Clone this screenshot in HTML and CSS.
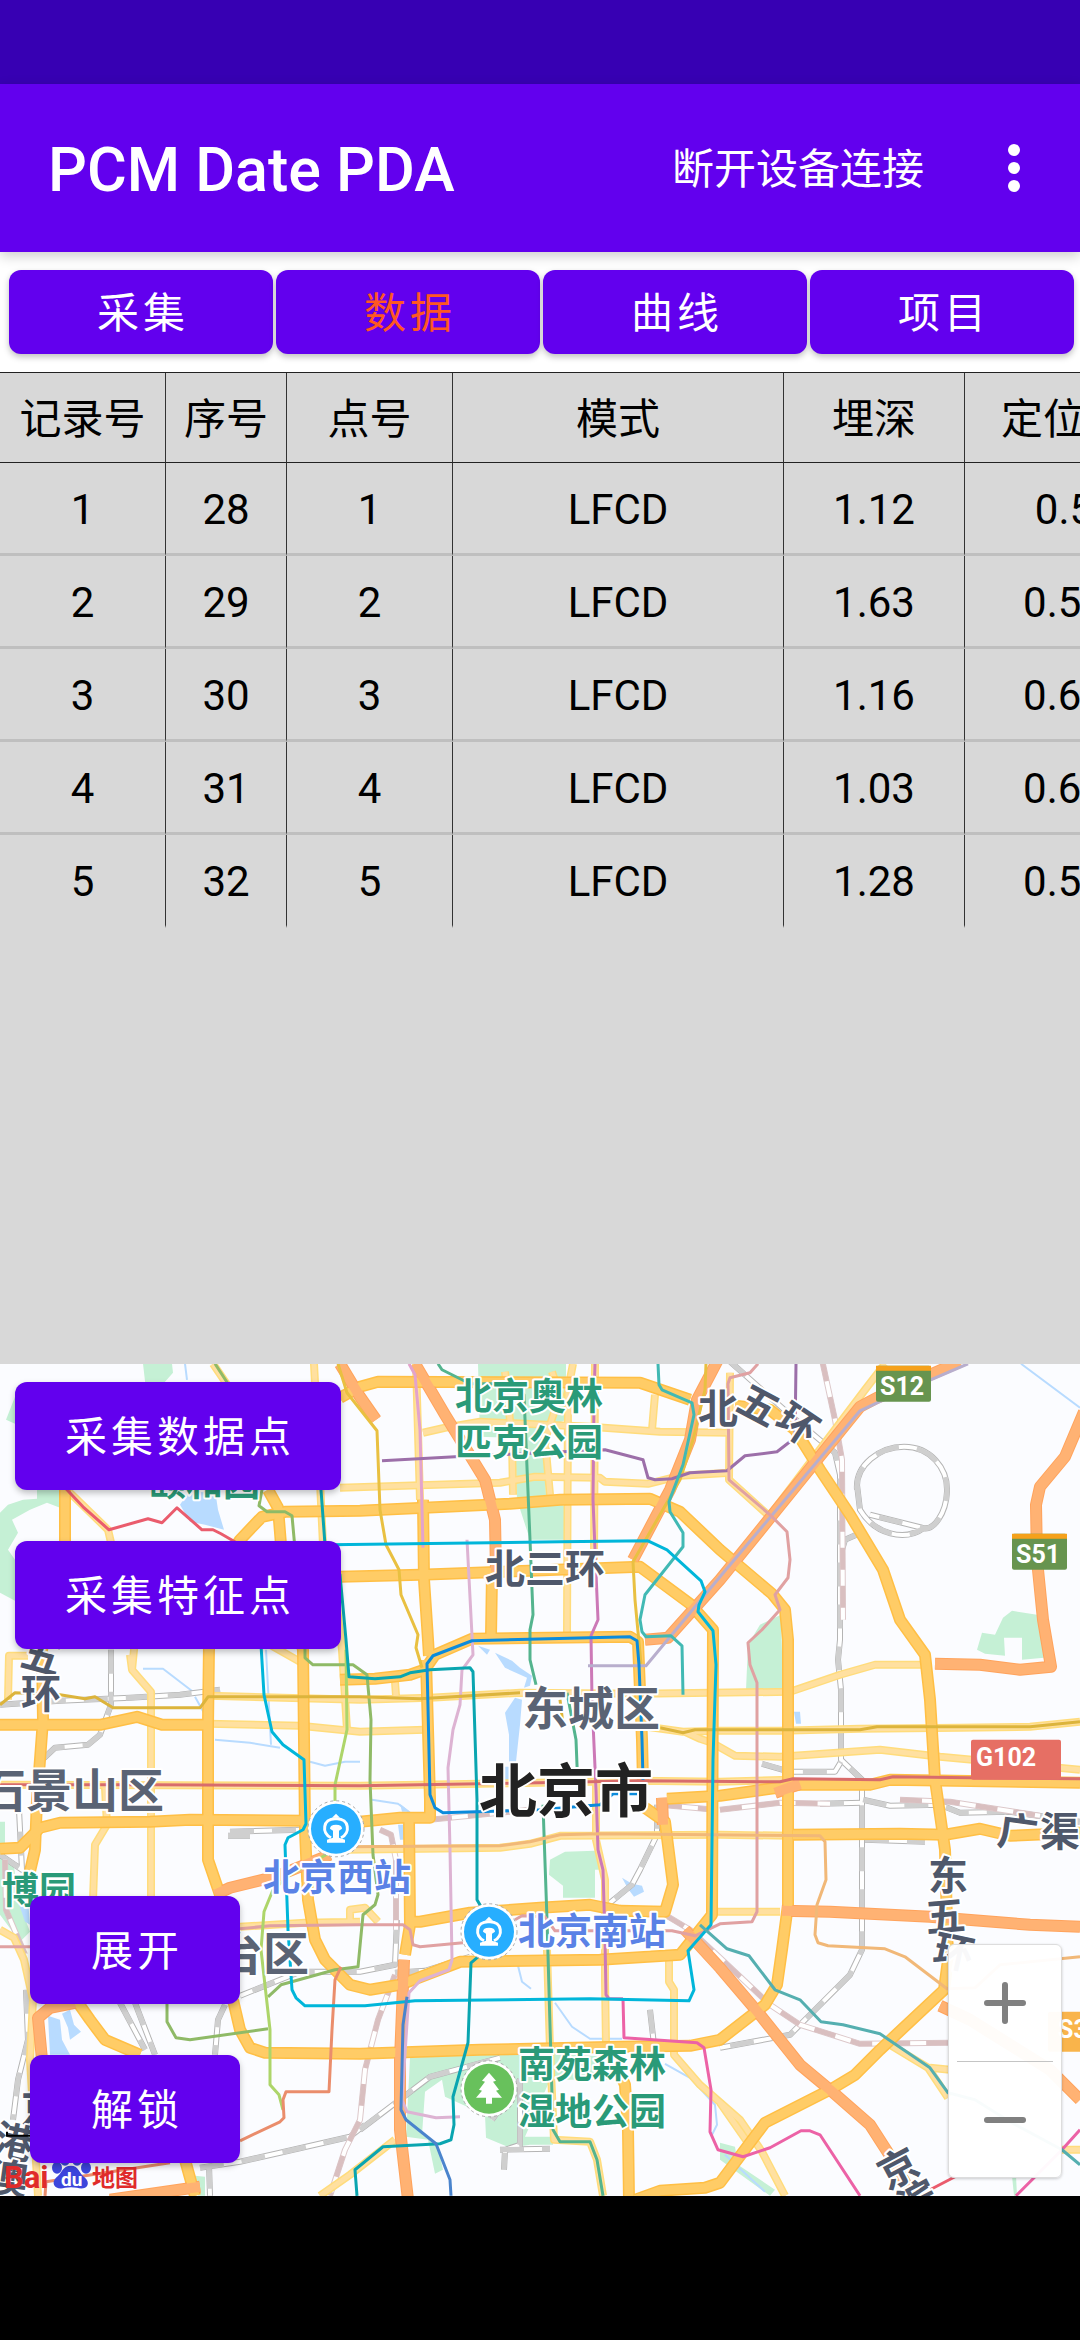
FILE: index.html
```
<!DOCTYPE html>
<html lang="zh-CN">
<head>
    <meta charset="UTF-8">
    <meta name="viewport" content="width=device-width, initial-scale=1.0">
    <title>PCM Date PDA</title>
    <link rel="stylesheet" href="styles.css">
</head>
<body>
    <div class="status-bar"></div>

    <header class="app-bar">
        <h1>PCM Date PDA</h1>
        <button class="app-action" type="button">断开设备连接</button>
        <button class="app-menu" type="button" aria-label="更多">
            <svg width="12" height="48" viewBox="0 0 12 48" fill="#fff">
                <circle cx="6" cy="6" r="6"/>
                <circle cx="6" cy="24" r="6"/>
                <circle cx="6" cy="42" r="6"/>
            </svg>
        </button>
    </header>

    <nav class="tabs">
        <button class="btn tab" type="button">采集</button>
        <button class="btn tab active" type="button">数据</button>
        <button class="btn tab" type="button">曲线</button>
        <button class="btn tab" type="button">项目</button>
    </nav>

    <main class="data-panel">
        <table class="data-table">
            <colgroup>
                <col class="col-record">
                <col class="col-index">
                <col class="col-point">
                <col class="col-mode">
                <col class="col-depth">
                <col class="col-locate">
            </colgroup>
            <thead>
                <tr><th>记录号</th><th>序号</th><th>点号</th><th>模式</th><th>埋深</th><th>定位点</th></tr>
            </thead>
            <tbody>
                <tr><td>1</td><td>28</td><td>1</td><td>LFCD</td><td>1.12</td><td>0.5</td></tr>
                <tr><td>2</td><td>29</td><td>2</td><td>LFCD</td><td>1.63</td><td>0.51</td></tr>
                <tr><td>3</td><td>30</td><td>3</td><td>LFCD</td><td>1.16</td><td>0.61</td></tr>
                <tr><td>4</td><td>31</td><td>4</td><td>LFCD</td><td>1.03</td><td>0.61</td></tr>
                <tr><td>5</td><td>32</td><td>5</td><td>LFCD</td><td>1.28</td><td>0.51</td></tr>
            </tbody>
        </table>
    </main>

    <section class="map">
        <svg class="map-canvas" viewBox="0 1364 1080 832" preserveAspectRatio="xMidYMid slice">
            <defs>
                <g id="minor">
                    <path d="M213 1364L232 1392M314 1364L318 1440L323 1545L333 1575L342 1650L347 1730M67 1490L108 1530L115 1560"/>
                    <path d="M340 1488L500 1483L535 1477L600 1478L605 1482L648 1484L680 1476L730 1473M423 1433L445 1428L480 1422L590 1427L660 1432L730 1433"/>
                    <path d="M416 1364L420 1500M573 1364L568 1390L567 1635M595 1364L594 1560M505 1372L512 1440L513 1495M552 1372L560 1395L545 1440L550 1495M655 1395L652 1430"/>
                    <path d="M730 1373L729 1480L770 1517M720 1582L865 1390L885 1364"/>
                    <path d="M130 1655L132 1670L151 1692L151 1900M105 1788L107 1825L95 1845L93 1900M8 1700L9 1656L28 1656M135 1640L132 1670M270 1645L300 1662"/>
                    <path d="M0 1785L360 1786L540 1783L640 1781L720 1782L790 1780"/>
                    <path d="M208 1724L300 1726L360 1732L425 1730M208 1696L360 1700L430 1698L520 1693L640 1694L790 1692L840 1675L875 1665L925 1665M395 1682L396 1696"/>
                    <path d="M640 1726L683 1732L720 1731L780 1731L860 1729L960 1728L1030 1727L1080 1722M685 1732L700 1739L712 1743L735 1756L780 1757L880 1750L940 1757L1080 1770"/>
                    <path d="M345 1850L500 1848L530 1844L560 1836L720 1835L790 1836M596 1780L596 1840L605 1880L605 1980L606 2045M712 1912L780 1912"/>
                    <path d="M547 1950L550 2050L554 2140L590 2142L597 2160L603 2196M669 1960L669 1982L674 1990L674 2055L700 2085L740 2120L762 2152L785 2196"/>
                    <path d="M240 1927L305 1923L360 1922M350 1922L350 1910L365 1908L378 1922"/>
                    <path d="M0 1930L14 1938L24 1960L33 2000L30 2060L38 2196M320 2196L350 2175L395 2140M720 2103L750 2146M950 2070L930 2068M948 2098L928 2068L890 2045M1062 2150L1080 2150"/>
                </g>
                <g id="major">
                    <path d="M340 1398L360 1387L378 1382L640 1383L690 1400M735 1406L770 1410L795 1430L820 1470L850 1515L883 1570L900 1620L925 1655L930 1700L935 1780L945 1850L948 1960L944 1990L880 2050L855 2075L830 2090L765 2123L720 2183L705 2188L660 2191L635 2200"/>
                    <path d="M268 1490L278 1508L281 1545L290 1600L303 1650L305 1830L308 1900L315 1940L325 1960L350 1985L370 1990L400 1985L460 1962L600 1960L680 1955L712 1915L713 1630L690 1604L640 1567L420 1575L340 1577"/>
                    <path d="M65 1490L65 1545M65 1550L42 1650L43 1720L37 1800L35 1850L28 1880"/>
                    <path d="M209 1650L215 1580L240 1540L262 1517L285 1512L360 1511L510 1504L560 1500L650 1499L680 1512L720 1550L772 1594L785 1610L788 1640L788 1905L782 1950L777 1985L765 2005L720 2040L690 2046L620 2047L480 2050L360 2054L265 2053L250 2048L240 2030L233 2000"/>
                    <path d="M423 1500L424 1580L428 1640L429 1656M492 1575L491 1636"/>
                    <path d="M426 1668L435 1655L472 1639L630 1637L638 1642L642 1740L643 1782M426 1660L430 1800L430 1818L400 1818L360 1822"/>
                    <path d="M340 1680L375 1679L410 1675L430 1668"/>
                    <path d="M0 1725L100 1725L137 1717L162 1725L208 1725M209 1645L208 1725L208 1860L220 1895"/>
                    <path d="M0 1849L20 1848L40 1828L60 1823L150 1822L190 1820L305 1821"/>
                    <path d="M409 1820L410 1925L405 1955M645 1808L665 1822L673 1885L665 1912L620 1911L590 1905L540 1908L470 1913L420 1922L408 1922"/>
                    <path d="M667 1799L720 1796L770 1789L800 1785L870 1785L890 1780L1080 1783M793 1835L900 1834L945 1835L980 1829L1010 1836L1080 1833"/>
                    <path d="M78 2003L90 2020L105 2040L140 2055M607 2045L625 2085L628 2130L629 2200M185 2160L195 2196"/>
                </g>
                <g id="express">
                    <path d="M415 1364L445 1415L485 1480L495 1520L496 1572M340 1364L360 1397L376 1420M720 1356L697 1400L690 1440L670 1490L633 1560"/>
                    <path d="M645 1640L668 1638L720 1580L860 1407L877 1398L960 1362"/>
                    <path d="M1084 1412L1065 1457L1040 1487L1036 1505L1037 1560L1043 1620L1051 1667L1020 1670L980 1665L935 1664"/>
                    <path d="M782 1911L830 1912L930 1917L1030 1925L1080 1927M775 1793L800 1784M662 1798L663 1825"/>
                    <path d="M685 1930L720 1968L760 2015L800 2065L830 2090L870 2125L888 2153L915 2200"/>
                    <path d="M215 1895L230 1888L275 1877L330 1855M404 1960L400 2060L400 2130L408 2200M42 2060L38 2018L50 2008L75 2003M110 2200L200 2187M940 2006L970 2020L1050 2070L1080 2100"/>
                </g>
                <g id="rail">
                    <path d="M728 1360L790 1415L835 1453L840 1475L840 1640L838 1660L841 1690L841 1760L862 1780L862 1950L850 1975L790 2035L720 2048M861 1533L845 1540L842 1550"/>
                    <path d="M857 1490C855 1465 880 1447 904 1447C930 1447 948 1468 947 1492C946 1513 934 1532 922 1528L870 1515M857 1485L860 1510C875 1535 905 1542 924 1528"/>
                    <path d="M111 1650L111 1705L100 1735L88 1745L55 1748L40 1762M0 1705L60 1701L130 1698L180 1695L220 1690"/>
                    <path d="M762 1764L790 1772L835 1772L841 1762M863 1800L890 1806L940 1805L960 1813L1010 1812L1080 1822M820 1804L862 1803M865 1840L925 1842"/>
                    <path d="M657 1805L657 1835L640 1870L632 1885L610 1903M403 1700M230 1832L300 1830M228 1836L250 1836"/>
                    <path d="M397 1920L395 1965L360 1972L300 1972L240 1996M395 1973L425 1971L470 1957M26 1990L28 2040L18 2080L13 2120M18 1790L22 1870L0 1855M120 2003L145 2050M135 2003L155 2055M225 2005L218 2020L215 2055"/>
                    <path d="M200 2168L240 2162L280 2153L350 2137L365 2125M209 2165L210 2196M360 2130L430 2077L500 2058M500 2150L550 2149M520 2080L520 2145L505 2150L504 2170M650 2010L654 2045M520 2080L492 2120"/>
                </g>
                <g id="rail-fast">
                    <path d="M822 1360L835 1420L842 1460L843 1620M720 1810L780 1803L830 1804M900 1800L950 1802L1040 1816M430 1820L530 1810M660 1805L715 1810"/>
                    <path d="M380 1830L391 1835L396 1860L396 1930M665 1915L690 1930L720 1958L770 2005L800 2025L860 2044L950 2043M395 1975L378 2020L365 2070L360 2120L345 2150L330 2196M5 1860L6 1910L25 1955"/>
                </g>
                <g id="station">
                    <circle r="28" fill="#fff" stroke="#aaa" stroke-dasharray="3 3"/>
                    <circle r="25" fill="#27aeff"/>
                    <path d="M-5 9C-15 4 -13 -10 -1 -10L1 -10C13 -10 15 4 5 9" fill="none" stroke="#fff" stroke-width="3"/>
                    <path d="M-4 -11L0 -15L4 -11ZM-6 0Q-6 -4 0 -4Q6 -4 6 0L3 2V9L9 11V14H-9V11L-3 9V2Z" fill="#fff"/>
                </g>
            </defs>

            <rect y="1364" width="1080" height="832" fill="#fbfcff"/>

            <!-- parks -->
            <g fill="#c5f0d5">
                <path d="M143 1364H172L173 1373L165 1382V1390H146ZM6 1420L15 1397V1424ZM0 1513L8 1505L23 1500L37 1499V1488H60V1508L47 1503L30 1510L12 1520L18 1533L8 1550L15 1560V1601L0 1593Z"/>
                <path d="M478 1364H566V1420L543 1430L546 1495L565 1507V1540H530L517 1500L515 1438L480 1437Z"/>
                <path d="M781 1615L760 1625L748 1645L746 1690H783ZM977 1650L982 1633L995 1635L1003 1618L1012 1611L1037 1615L1042 1640L1044 1658L1022 1660V1638H1004L1005 1656L985 1654Z"/>
                <path d="M550 1860L565 1852L595 1851L600 1870H595V1898H563V1886L549 1875Z"/>
                <path d="M410 2058L520 2052L625 2058V2080H550L525 2137H553V2145H530L510 2148L486 2138L485 2115L445 2097L442 2080L425 2092L422 2135L437 2143L443 2170L435 2174L428 2140L406 2137Z"/>
                <path d="M0 1822H5V1860L14 1866L18 1900L30 1932L20 1942L0 1915ZM195 2176L205 2177V2196H198ZM720 2143L735 2147L738 2165L775 2190L770 2196L720 2160ZM1012 2176H1016L1017 2196H1014Z"/>
            </g>

            <!-- water -->
            <g fill="#b8dbff">
                <path d="M180 1505L190 1490H215L218 1510L224 1530L205 1525L190 1522ZM505 1713L515 1698L522 1700L520 1725L516 1762H509V1735ZM503 1767H509V1785H503Z"/>
                <path d="M478 1646L490 1650L487 1655ZM495 1653L512 1661L520 1668L532 1676L530 1686L524 1688L527 1678L505 1668ZM400 1804L410 1812H402ZM398 1825H404V1840H400Z"/>
                <path d="M48 2016L60 2020L62 2040L70 2055H50ZM62 2014L70 2010L74 2025L81 2032L70 2040L68 2028ZM14 1890L28 1900L30 1925L25 1922ZM794 1712H800L801 1724H796ZM622 1878L632 1884L642 1886L644 1892L634 1897L628 1889Z"/>
            </g>
            <g class="stream">
                <path d="M185 1364L187 1380M143 1669L163 1669L193 1692M195 1697L205 1715M266 1650L271 1745M215 1740L250 1743L280 1748M310 1762L325 1766L345 1762L360 1762M372 1800L398 1804L410 1813"/>
                <path d="M518 1966L522 1982L531 1989M555 2003L572 2027L590 2039L622 2039M665 2064L690 2078L715 2105L717 2125L712 2135M725 2155L765 2192M1021 1364L1080 1408"/>
            </g>

            <!-- roads -->
            <use href="#rail" class="rail-edge"/>
            <use href="#rail" class="rail-bed"/>
            <use href="#rail" class="rail-dash"/>
            <use href="#rail-fast" class="rail-fast-edge"/>
            <use href="#rail-fast" class="rail-bed"/>
            <use href="#rail-fast" class="rail-fast-dash"/>
            <use href="#minor" class="minor-edge"/>
            <use href="#minor" class="minor-fill"/>
            <use href="#major" class="major-edge"/>
            <use href="#express" class="express-edge"/>
            <use href="#major" class="major-fill"/>
            <use href="#express" class="express-fill"/>

            <!-- metro lines -->
            <g class="metro">
                <path stroke="#ea5c6d" d="M66 1489L83 1507L109 1530L148 1519L162 1523L177 1508L202 1530H213L221 1534L240 1545M930 2190L955 2177"/>
                <path stroke="#e9c041" d="M338 1364L347 1393L377 1431L380 1510L386 1545L399 1570L401 1595L418 1635L416 1648L422 1668M706 1364L705 1390L693 1440L680 1480L633 1562L635 1600L641 1664"/>
                <path stroke="#e3a3cc" d="M409 1364L415 1375L420 1430L423 1548"/>
                <path stroke="#ddb3d3" d="M467 1540L473 1655L462 1670L460 1705L453 1730L448 1768L450 1850L452 1960L449 1970L420 1981L409 1993L402 2100L407 2112L436 2118L460 2117"/>
                <path stroke="#9c6fa9" d="M382 1461L455 1457L520 1454L605 1450L643 1460L648 1478L655 1480L672 1479L690 1473L727 1471L745 1456L777 1452L795 1438L796 1364"/>
                <path stroke="#54b48e" d="M438 1364L442 1370L470 1384L510 1384L524 1395L530 1540L533 1615L530 1630V1660L536 1685M567 1693L576 1740L578 1790M543 1805L547 1920L553 2130L560 2142H590L597 2160L603 2196"/>
                <path stroke="#cc79b7" d="M595 1364L594 1400L593 1500L595 1550L598 1620L591 1636L592 1700L596 1790L598 1850L603 1870L605 1940L606 1995L609 1999H623"/>
                <path stroke="#ec62a6" d="M623 1999L624 2038L697 2043L704 2048L711 2090L710 2132L718 2150L743 2157L770 2148L801 2131H810L820 2135L860 2196M1080 2130L1062 2150L1016 2196"/>
                <path stroke="#b8aecd" d="M588 1666H646L720 1577L860 1411L877 1403L968 1364"/>
                <path stroke="#e0a1a2" d="M758 1364L750 1373L730 1378L728 1384L729 1480L770 1515L787 1532L790 1560L788 1578L775 1595L780 1610L762 1630L748 1643L750 1665L757 1683V1912L752 1922L720 1924L695 1936L672 1931H555L545 1917L522 1916L515 1920M463 1943L420 1947L413 1945L410 1930L403 1925H360L270 1926L240 1929M0 1947H30"/>
                <path stroke="#41b9b4" d="M658 1364L659 1385L662 1390L692 1403L694 1415L683 1465L669 1502L670 1512L683 1533V1547L645 1595L640 1620L642 1632L646 1637L671 1636L682 1646L683 1695"/>
                <path stroke="#8fba67" d="M228 1384L215 1364M262 1490L259 1506L267 1512H285L292 1516L296 1560L305 1650V1658L313 1665H353L367 1675L371 1720L370 1780L373 1855L378 1895L375 1905L363 1915L358 1967L335 1970L281 1985L268 1997M167 2000V2022L176 2038L190 2040L268 2029"/>
                <path stroke="#add56a" d="M346 1650L347 1730L335 1785V1850L290 1875L273 1890L264 1912L261 1950L270 2030V2085L279 2095L283 2110"/>
                <path stroke="#ea8d6c" d="M341 1967L335 1980L332 2030L329 2092H286L283 2100L284 2118L280 2122L240 2141M45 2196L46 2182L170 2163"/>
                <path stroke="#dcb43c" d="M0 1705L15 1693L60 1695L85 1699L95 1697L113 1708H200L208 1697H360L420 1699L520 1693M660 1728L683 1733L695 1730H860L877 1727H1030L1080 1722M560 1700L563 1725"/>
                <path stroke="#d86c6c" d="M0 1785H150L360 1786L540 1783L640 1781L780 1782L793 1779L880 1780L893 1777L970 1778L1080 1779"/>
                <path stroke="#f1b878" d="M345 1847L500 1846L530 1842L560 1835L600 1834L820 1836L825 1842L826 1880L817 1905L815 1935L818 1943L828 1946L885 1949L905 1957L947 1989L975 1988L1000 1965L1080 1957"/>
                <path stroke="#00b6da" d="M330 1545L560 1542L648 1541L667 1550L701 1581L705 1592L699 1605L698 1612L713 1631L716 1665L713 1760L711 1925L688 1951L694 1990L689 2001L590 1999L415 2001L365 2006H305L296 1998L292 1990L288 1930L285 1845L288 1838L303 1830L306 1824L304 1760L283 1745L272 1732L264 1695L261 1645"/>
                <path stroke="#0aa5b0" d="M321 1490L325 1545L340 1575L346 1640L349 1677L375 1679L400 1677L410 1673L430 1670L470 1668L473 1672L477 1800V1900L484 1912M478 1957L471 1963L468 2043L453 2097L454 2125L451 2140L440 2144L383 2147L355 2170L357 2196"/>
                <path stroke="#0b8bdc" d="M643 1780L642 1740L639 1665L637 1641L630 1637L472 1641L433 1656L427 1664L430 1795L435 1808L443 1813L540 1810L600 1805L613 1794H640"/>
                <path stroke="#4a84cd" d="M407 1997L403 2025L401 2110L406 2120L436 2144L450 2180L451 2196"/>
                <path stroke="#55afb0" d="M700 1925L727 1949L749 1956L775 1990L800 2000L821 2022L843 2025L880 2034L930 2068L948 2093L975 2100L1010 2122L1062 2150L1080 2165"/>
            </g>

            <!-- road shields -->
            <g class="shield">
                <rect x="876" y="1366" width="55" height="36" rx="2" fill="#67944f"/>
                <rect x="876" y="1366" width="55" height="5" fill="#f5a11b"/>
                <text x="880" y="1395">S12</text>
                <rect x="1012" y="1534" width="55" height="36" rx="2" fill="#67944f"/>
                <rect x="1012" y="1534" width="55" height="5" fill="#f5a11b"/>
                <text x="1016" y="1563">S51</text>
                <rect x="971" y="1740" width="90" height="40" rx="2" fill="#e66f64"/>
                <text x="976" y="1766">G102</text>
                <rect x="1048" y="2012" width="50" height="40" rx="2" fill="#f9b44b"/>
                <text x="1058" y="2038">S323</text>
            </g>

            <!-- place names -->
            <g class="label park">
                <text x="455" y="1410">北京奥林</text>
                <text x="455" y="1456">匹克公园</text>
                <text x="149" y="1496">颐和园</text>
                <text x="2" y="1904">博园</text>
                <text x="518" y="2078">南苑森林</text>
                <text x="518" y="2125">湿地公园</text>
            </g>
            <g class="label rail-stop">
                <text x="263" y="1891">北京西站</text>
                <text x="518" y="1945">北京南站</text>
            </g>
            <g class="label district">
                <text x="522" y="1725">东城区</text>
                <text x="-20" y="1807">石景山区</text>
                <text x="171" y="1970">丰台区</text>
            </g>
            <g class="label city">
                <text x="479" y="1812">北京市</text>
            </g>
            <g class="label road">
                <text x="485" y="1583">北三环</text>
                <text transform="translate(718 1408)" x="-20" y="15">北</text>
                <text transform="translate(759 1405) rotate(28)" x="-20" y="15">五</text>
                <text transform="translate(798 1424) rotate(34)" x="-20" y="15">环</text>
                <text transform="translate(42 1656) rotate(15)" x="-20" y="15">五</text>
                <text transform="translate(41 1693)" x="-20" y="15">环</text>
                <text transform="translate(1018 1832) rotate(8)" x="-20" y="15">广</text>
                <text transform="translate(1060 1831)" x="-20" y="15">渠</text>
                <text transform="translate(948 1875)" x="-20" y="15">东</text>
                <text transform="translate(945 1916) rotate(-5)" x="-20" y="15">五</text>
                <text transform="translate(954 1952) rotate(12)" x="-20" y="15">环</text>
                <text transform="translate(898 2168) rotate(-28)" x="-20" y="15">京</text>
                <text transform="translate(918 2200) rotate(-28)" x="-20" y="15">滨</text>
                <text transform="translate(41 2108)" x="-20" y="15">京</text>
                <text transform="translate(14 2142) rotate(12)" x="-20" y="15">港</text>
                <text transform="translate(8 2178) rotate(8)" x="-20" y="15">澳</text>
            </g>
            <path d="M7 2132V2136H60" fill="none" stroke="#000" stroke-width="2"/>

            <!-- markers -->
            <use href="#station" x="336" y="1829"/>
            <use href="#station" x="489" y="1932"/>
            <g transform="translate(489 2089)">
                <circle r="28" fill="#fff" stroke="#aaa" stroke-dasharray="3 3"/>
                <circle r="25" fill="#68c15c"/>
                <path d="M0 -16L7 -8L4 -7L10 1L7 2L13 9H3V15H-3V9H-13L-7 2L-10 1L-4 -7L-7 -8Z" fill="#fff"/>
            </g>

            <!-- map provider logo -->
            <g class="provider">
                <text class="provider-latin" x="4" y="2188">Bai</text>
                <g fill="#3c45dc">
                    <ellipse cx="57" cy="2168" rx="5" ry="6"/>
                    <ellipse cx="65" cy="2160" rx="5" ry="6"/>
                    <ellipse cx="77" cy="2160" rx="5" ry="6"/>
                    <ellipse cx="86" cy="2168" rx="5" ry="6"/>
                    <path d="M71 2166C79 2166 79 2174 85 2178C92 2185 85 2191 77 2188Q71 2187 65 2188C56 2191 50 2184 56 2178C62 2174 62 2166 71 2166Z"/>
                </g>
                <text class="provider-du" x="61" y="2186">du</text>
                <text class="provider-name" x="92" y="2186">地图</text>
            </g>
        </svg>

        <div class="map-actions top">
            <button class="btn map-btn" type="button">采集数据点</button>
            <button class="btn map-btn" type="button">采集特征点</button>
        </div>
        <div class="map-actions bottom">
            <button class="btn map-btn" type="button">展开</button>
            <button class="btn map-btn" type="button">解锁</button>
        </div>
        <div class="zoom-control">
            <button type="button" aria-label="放大">
                <svg width="42" height="42" viewBox="0 0 42 42"><path d="M3 21H39M21 3V39"/></svg>
            </button>
            <button type="button" aria-label="缩小">
                <svg width="42" height="42" viewBox="0 0 42 42"><path d="M3 21H39"/></svg>
            </button>
        </div>
    </section>

    <div class="nav-bar"></div>
</body>
</html>
```

FILE: styles.css
```
* {
    box-sizing: border-box;
}

body {
    margin: 0;
    min-height: 100vh;
    display: flex;
    flex-direction: column;
    font-family: Roboto, "Noto Sans CJK SC", sans-serif;
    font-size: 42px;
    color: #000;
    background: #fff;
}

button {
    border: none;
    margin: 0;
    padding: 0;
    font: inherit;
    color: inherit;
    background: none;
    cursor: pointer;
}

svg {
    display: block;
}

.status-bar {
    height: 84px;
    background: #3700b3;
}

.app-bar {
    position: relative;
    display: flex;
    align-items: center;
    height: 168px;
    padding: 0 60px 0 48px;
    color: #fff;
    background: #6200ee;
    box-shadow: 0 4px 12px rgba(0, 0, 0, 0.2);
}

.app-bar h1 {
    flex: 1;
    margin: 0;
    padding-top: 4px;
    font-size: 61px;
    font-weight: 500;
}

.app-action {
    padding-bottom: 6px;
}

.app-menu {
    margin-left: 84px;
}

/* Buttons */
.btn {
    padding-bottom: 6px;
    color: #fff;
    background: #6200ee;
    border-radius: 12px;
    letter-spacing: 4px;
    text-indent: 4px;
    box-shadow: 0 3px 6px rgba(0, 0, 0, 0.25);
}

.tabs {
    display: flex;
    gap: 3px;
    padding: 18px 6px 18px 9px;
}

.tab {
    flex: 1;
    height: 84px;
}

.tab.active {
    color: #ff5722;
}

/* Data table */
.data-panel {
    flex: 31 1 0;
    overflow: hidden;
    background: #d8d8d8;
    border-top: 1px solid #222;
}

.data-table {
    width: 1164px;
    table-layout: fixed;
    border-spacing: 0;
}

.col-record { width: 166px; }
.col-index { width: 121px; }
.col-point { width: 166px; }
.col-mode { width: 331px; }
.col-depth { width: 181px; }
.col-locate { width: 199px; }

.data-table th,
.data-table td {
    height: 93px;
    padding: 4px 0 0;
    text-align: center;
    font-weight: 400;
    line-height: 48px;
    border-right: 1px solid #333;
    border-bottom: 3px solid #bfbfbf;
}

.data-table th {
    height: 90px;
    border-bottom: 1px solid #222;
}

.data-table tr:last-child td {
    border-bottom-color: #d8d8d8;
}

/* Map */
.map {
    position: relative;
    flex: 26 1 0;
    min-height: 0;
    overflow: hidden;
    background: #fbfcff;
}

.map-canvas {
    position: absolute;
    width: 100%;
    height: 100%;
    fill: none;
    stroke-linejoin: round;
}

.minor-edge { stroke: #ffdc7c; stroke-width: 8px; }
.minor-fill { stroke: #ffe0a0; stroke-width: 5px; }
.major-edge { stroke: #ffbf45; stroke-width: 12px; }
.major-fill { stroke: #ffcc66; stroke-width: 9px; }
.express-edge { stroke: #ffa35c; stroke-width: 12px; }
.express-fill { stroke: #ffb273; stroke-width: 10px; }
.rail-edge { stroke: #b4b4b4; stroke-width: 6px; }
.rail-bed { stroke: #fff; stroke-width: 4px; }
.rail-dash { stroke: #cfcfcf; stroke-width: 5px; stroke-dasharray: 24px 18px; }
.rail-fast-edge { stroke: #dcc8ca; stroke-width: 6px; }
.rail-fast-dash { stroke: #d9bfc0; stroke-width: 5px; stroke-dasharray: 22px 16px; }
.stream { stroke: #b8dbff; stroke-width: 2px; }
.metro { stroke-width: 3px; }

.label {
    font-family: "Noto Sans CJK SC", sans-serif;
    font-weight: 700;
    stroke: #fff;
    stroke-width: 4px;
    paint-order: stroke;
}

.park { font-size: 37px; fill: #2a9a78; }
.rail-stop { font-size: 37px; fill: #5a82e6; }
.district { font-size: 46px; fill: #5a6374; }
.road { font-size: 40px; fill: #4f586b; }
.city { font-size: 58px; fill: #222; }

.shield {
    font-size: 25px;
    font-weight: 700;
}

.shield text {
    fill: #fff;
}

.provider {
    font-weight: 700;
    fill: #e02b2b;
}

.provider-latin {
    font-size: 31px;
}

.provider-du {
    font-size: 19px;
    fill: #fff;
}

.provider-name {
    font-family: "Noto Sans CJK SC", sans-serif;
    font-size: 23px;
}

.map-actions {
    position: absolute;
    display: flex;
    flex-direction: column;
    gap: 51px;
}

.map-actions.top {
    top: 18px;
    left: 15px;
}

.map-actions.bottom {
    bottom: 33px;
    left: 30px;
}

.map-btn {
    height: 108px;
    padding: 0 46px 6px;
    min-width: 210px;
}

.zoom-control {
    position: absolute;
    right: 18px;
    bottom: 18px;
    display: flex;
    flex-direction: column;
    padding: 0 8px;
    background: rgba(255, 255, 255, 0.96);
    border: 1px solid #ddd;
    border-radius: 6px;
    box-shadow: 0 1px 3px rgba(0, 0, 0, 0.2);
}

.zoom-control button {
    display: flex;
    align-items: center;
    justify-content: center;
    width: 96px;
    height: 116px;
}

.zoom-control button + button {
    border-top: 1px solid #c4c4c4;
}

.zoom-control path {
    stroke: #808080;
    stroke-width: 6px;
    stroke-linecap: round;
}

.nav-bar {
    height: 144px;
    background: #000;
}
```
